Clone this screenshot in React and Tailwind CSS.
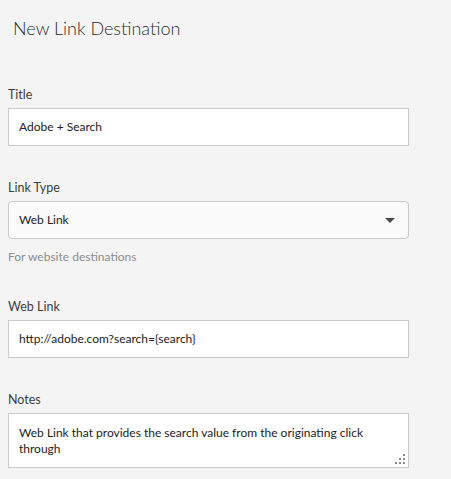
const fields = [
  { label: "Title", value: "Adobe + Search", kind: "input" },
  { label: "Link Type", value: "Web Link", kind: "select", hint: "For website destinations" },
  { label: "Web Link", value: "http://adobe.com?search={search}", kind: "input" },
  {
    label: "Notes",
    value: "Web Link that provides the search value from the originating click through",
    kind: "textarea",
  },
];

function Grip() {
  return (
    <svg className="absolute right-[3px] bottom-[3px]" width="10" height="10" viewBox="0 0 10 10">
      <g fill="#8a8a8a">
        <rect x="8" y="0" width="2" height="2" />
        <rect x="4" y="4" width="2" height="2" />
        <rect x="8" y="4" width="2" height="2" />
        <rect x="0" y="8" width="2" height="2" />
        <rect x="4" y="8" width="2" height="2" />
        <rect x="8" y="8" width="2" height="2" />
      </g>
    </svg>
  );
}

function Field({ f }) {
  return (
    <div className="flex flex-col">
      <div className="text-[12.5px] leading-[16px] text-[#3e3e3e] mb-[5px]">{f.label}</div>
      {f.kind === "input" && (
        <div className="h-[38px] border border-[#cacaca] bg-white flex items-center px-[10px] text-[12px] text-[#222]">
          {f.value}
        </div>
      )}
      {f.kind === "select" && (
        <>
          <div className="h-[38px] border border-[#cacaca] rounded-[4px] bg-[#fafafa] flex items-center justify-between pl-[10px] pr-[13px] text-[12px] text-[#222]">
            <span>{f.value}</span>
            <svg width="10" height="5" viewBox="0 0 10 5">
              <path d="M0 0h10L5 5z" fill="#4b4b4b" />
            </svg>
          </div>
          <div className="mt-[10px] text-[12px] leading-[16px] text-[#8e8e8e]">{f.hint}</div>
        </>
      )}
      {f.kind === "textarea" && (
        <div className="relative h-[55px] border border-[#cacaca] bg-white px-[10px] pt-[11px] text-[12px] leading-[16px] text-[#222]">
          {f.value}
          <Grip />
        </div>
      )}
    </div>
  );
}

export default function App() {
  return (
    <div className="w-[451px] h-[479px] bg-[#f4f4f4] overflow-hidden font-['Lato','Open_Sans',sans-serif]">
      <h1 className="pl-[13px] pt-[17px] text-[18px] leading-[22px] font-light text-[#2c2c2c]">
        New Link Destination
      </h1>
      <div className="pl-[8px] w-[409px] mt-[48px] flex flex-col gap-[34px]">
        {fields.map((f) => (
          <Field key={f.label} f={f} />
        ))}
      </div>
    </div>
  );
}
